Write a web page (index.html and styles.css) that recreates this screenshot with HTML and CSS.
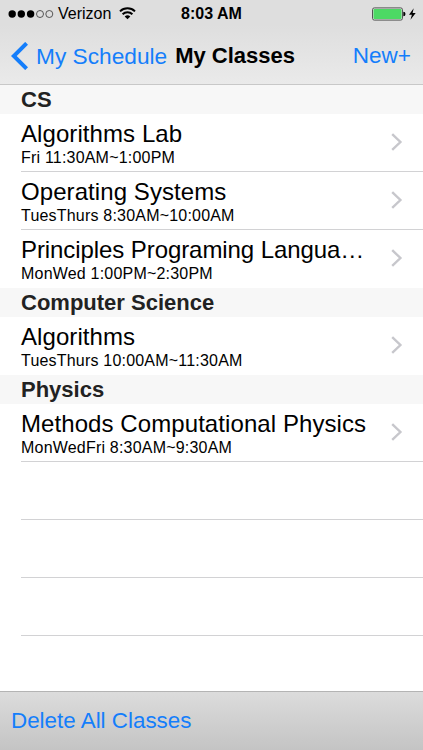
FILE: index.html
```
<!DOCTYPE html>
<html lang="en">
<head>
    <meta charset="UTF-8">
    <meta name="viewport" content="width=device-width, initial-scale=1.0">
    <title>My Classes</title>
    <link rel="stylesheet" href="styles.css">
</head>
<body>
    <div id="app">
        <header class="top">
            <div class="status-bar">
                <div class="carrier">
                    <svg class="signal" width="46" height="10" viewBox="0 0 46 10">
                        <circle cx="4.2" cy="5" r="3.7"/>
                        <circle cx="13.3" cy="5" r="3.7"/>
                        <circle cx="22.6" cy="5" r="3.7"/>
                        <circle class="empty" cx="32" cy="5" r="3.5"/>
                        <circle class="empty" cx="41.3" cy="5" r="3.5"/>
                    </svg>
                    <span class="carrier-name">Verizon</span>
                    <svg class="wifi" width="17" height="13" viewBox="0 0 17 13">
                        <path d="M1 4.4 A10.8 10.8 0 0 1 16 4.4"/>
                        <path d="M3.6 7.3 A7 7 0 0 1 13.4 7.3"/>
                        <path class="wedge" d="M5.7 9.5 A4.2 4.2 0 0 1 11.3 9.5 L8.5 12.3 Z"/>
                    </svg>
                </div>
                <span class="clock">8:03 AM</span>
                <svg class="battery" width="45" height="14" viewBox="0 0 45 14">
                    <rect class="shell" x="0.5" y="0.9" width="30" height="12.2" rx="1.8"/>
                    <rect class="charge" x="1.5" y="1.9" width="28" height="10.2" rx="0.8"/>
                    <path d="M31.3 4.8 A2.2 2.2 0 0 1 31.3 9.2 Z"/>
                    <path d="M41.7 1.3 L37 7.8 H39.9 L38.5 12.7 L43.7 5.9 H40.6 Z"/>
                </svg>
            </div>
            <nav class="nav-bar">
                <a class="back">
                    <svg width="17" height="28" viewBox="0 0 17 28">
                        <path d="M15.6 1.3 L2.8 14 L15.6 26.7"/>
                    </svg>
                    <span>My Schedule</span>
                </a>
                <h1>My Classes</h1>
                <a class="new">New+</a>
            </nav>
        </header>

        <main class="classes">
            <h2>CS</h2>
            <ul>
                <li>
                    <div class="info">
                        <div class="name">Algorithms Lab</div>
                        <div class="time">Fri 11:30AM~1:00PM</div>
                    </div>
                    <svg class="arrow" width="12" height="18" viewBox="0 0 12 18"><path d="M1.2 1.1 L9.4 9 L1.2 16.9"/></svg>
                </li>
                <li>
                    <div class="info">
                        <div class="name">Operating Systems</div>
                        <div class="time">TuesThurs 8:30AM~10:00AM</div>
                    </div>
                    <svg class="arrow" width="12" height="18" viewBox="0 0 12 18"><path d="M1.2 1.1 L9.4 9 L1.2 16.9"/></svg>
                </li>
                <li>
                    <div class="info">
                        <div class="name long">Principles Programing Langua…</div>
                        <div class="time">MonWed 1:00PM~2:30PM</div>
                    </div>
                    <svg class="arrow" width="12" height="18" viewBox="0 0 12 18"><path d="M1.2 1.1 L9.4 9 L1.2 16.9"/></svg>
                </li>
            </ul>
            <h2>Computer Science</h2>
            <ul>
                <li>
                    <div class="info">
                        <div class="name">Algorithms</div>
                        <div class="time">TuesThurs 10:00AM~11:30AM</div>
                    </div>
                    <svg class="arrow" width="12" height="18" viewBox="0 0 12 18"><path d="M1.2 1.1 L9.4 9 L1.2 16.9"/></svg>
                </li>
            </ul>
            <h2>Physics</h2>
            <ul class="last">
                <li>
                    <div class="info">
                        <div class="name">Methods Computational Physics</div>
                        <div class="time">MonWedFri 8:30AM~9:30AM</div>
                    </div>
                    <svg class="arrow" width="12" height="18" viewBox="0 0 12 18"><path d="M1.2 1.1 L9.4 9 L1.2 16.9"/></svg>
                </li>
                <li></li>
                <li></li>
                <li></li>
            </ul>
        </main>

        <footer class="toolbar">
            <a>Delete All Classes</a>
        </footer>
    </div>
</body>
</html>
```
FILE: styles.css
```
* {
    box-sizing: border-box;
}

body {
    margin: 0;
    font-family: "Liberation Sans", Arial, sans-serif;
    background-color: #fff;
    color: #000;
}

#app {
    display: flex;
    flex-direction: column;
    height: 750px;
    overflow: hidden;
}

.top {
    height: 85px;
    background: linear-gradient(#dedede, #dedede 30%, #eaeaea);
    border-bottom: 1px solid #c8c8c8;
}

.status-bar {
    display: grid;
    grid-template-columns: 1fr auto 1fr;
    align-items: center;
    height: 28px;
    padding: 0 6px 0 8px;
}

.carrier {
    display: flex;
    align-items: center;
}

.signal .empty {
    fill: none;
    stroke: #333;
    stroke-width: 0.8;
}

.carrier-name {
    margin-left: 4px;
    font-size: 16px;
}

.wifi {
    margin-left: 8px;
    margin-bottom: 2px;
    fill: none;
    stroke: #000;
    stroke-width: 2;
}

.wifi .wedge {
    fill: #000;
    stroke: none;
}

.clock {
    margin-right: 2px;
    font-size: 16px;
    font-weight: bold;
}

.battery {
    justify-self: end;
}

.battery .shell {
    fill: none;
    stroke: #555;
}

.battery .charge {
    fill: #4cd964;
}

.nav-bar {
    display: flex;
    align-items: center;
    height: 56px;
    padding: 0 12px 0 11px;
}

.back {
    display: flex;
    align-items: center;
    color: #147efb;
    font-size: 22.7px;
}

.back svg {
    margin-right: 8px;
    fill: none;
    stroke: #147efb;
    stroke-width: 4;
}

h1 {
    margin: 0 0 0 8px;
    font-size: 22px;
    white-space: nowrap;
}

.new {
    margin-left: auto;
    color: #147efb;
    font-size: 22.5px;
}

.classes {
    flex: 1;
}

h2 {
    height: 29px;
    margin: 0;
    padding-left: 21px;
    background-color: #f7f7f7;
    color: #222;
    font-size: 22px;
    line-height: 30px;
}

ul {
    list-style-type: none;
    margin: 0;
    padding: 0;
}

li {
    display: flex;
    align-items: center;
    height: 58px;
    margin-left: 21px;
    padding-right: 20px;
    border-bottom: 1px solid #d2d2d4;
}

li:last-child {
    border-bottom-color: transparent;
}

.last li:last-child {
    border-bottom-color: #d2d2d4;
}

.info {
    flex: 1;
    padding-top: 2px;
}

.name {
    font-size: 24px;
    line-height: 28px;
    letter-spacing: 0.08px;
    white-space: nowrap;
}

.name.long {
    letter-spacing: -0.08px;
}

.time {
    font-size: 16px;
    line-height: 20px;
    letter-spacing: 0.2px;
}

.arrow {
    margin-bottom: 2px;
    fill: none;
    stroke: #c7c7cc;
    stroke-width: 2.4;
}

.toolbar {
    height: 59px;
    padding: 0 11px;
    background: linear-gradient(#dcdcdc, #c4c4c4);
    border-top: 1px solid #b4b4b4;
    color: #147efb;
    font-size: 22.4px;
    line-height: 58px;
}
```
